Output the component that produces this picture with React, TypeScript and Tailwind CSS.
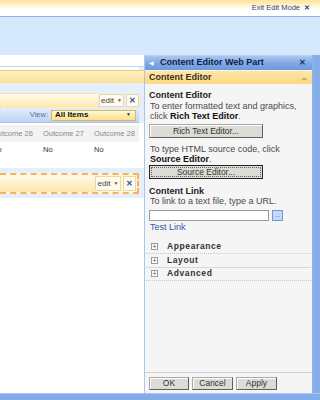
import React from "react";

const btn =
  "h-[13px] flex items-center justify-center bg-[#dcdbd5] border border-[#a9a9a9] border-r-[#5f5f5f] border-b-[#5f5f5f] shadow-[inset_1px_1px_0_#fff] text-[8.5px] text-[#333]";

function EditBox({ w }: { w: string }) {
  return (
    <div className="flex items-stretch gap-[2px] h-full py-[1px]">
      <div className={`${w} flex items-center justify-center gap-[3px] bg-[#fffaea] border border-[#ead9a6] text-[8px] text-[#444]`}>
        edit <span className="text-[5px] text-[#555]">▼</span>
      </div>
      <div className="w-[13px] flex items-center justify-center bg-[#fffaea] border border-[#ead9a6] text-[8px] font-bold text-[#3450a8]">
        ✕
      </div>
    </div>
  );
}

function Expander({ label, dotted }: { label: string; dotted?: boolean }) {
  return (
    <div
      className={`h-[13.5px] flex items-center gap-[9px] pl-[5px] border-b ${
        dotted ? "border-dotted border-[#c8c8c8]" : "border-[#d8d8d8]"
      }`}
    >
      <span className="w-[7px] h-[7px] border border-[#9a9a9a] bg-white flex items-center justify-center text-[7px] leading-none text-[#555]">
        +
      </span>
      <span className="text-[8.5px] font-bold tracking-[0.6px] text-[#333]">{label}</span>
    </div>
  );
}

export default function App() {
  return (
    <div className="w-[320px] h-[400px] overflow-hidden flex flex-col bg-white font-['Liberation_Sans',Arial,sans-serif]">
      {/* Top edit-mode bar */}
      <div className="h-[16px] flex items-center justify-end pr-[10px] gap-[4px] bg-[linear-gradient(#fbe39a,#fff4d2_35%,#ffffff_60%)]">
        <span className="text-[7.5px] text-[#33487e]">Exit Edit Mode</span>
        <span className="text-[7px] font-bold text-[#33487e]">✕</span>
      </div>
      <div className="h-[1px] bg-[#8cb2e6]" />
      <div className="h-[38px] bg-[#d6e8fc]" />

      {/* Main area */}
      <div className="h-[338px] flex">
        {/* Left page content */}
        <div className="w-[145px] bg-white flex flex-col overflow-hidden border-r border-[#a8c6ee]">
          <div className="h-[11px]" />
          <div className="border-t border-[#bcd3f2] bg-[#e5eefb] pr-[5px] flex flex-col">
            <div className="h-[3px] bg-white" />
            <div className="h-[13px] border-t border-[#f2c57c] bg-[linear-gradient(#fff1c4,#fde095)] -mr-[5px]" />
            <div className="h-[10px]" />
            {/* web part title */}
            <div className="h-[15px] flex items-stretch">
              <div className="flex-1 border-y border-dotted border-[#f2d9a0] bg-[linear-gradient(#fffbea,#fde9ad)]" />
              <div className="w-[1px]" />
              <EditBox w="w-[25px]" />
            </div>
            {/* toolbar */}
            <div className="h-[15px] flex items-center justify-end gap-[3px] pr-[3px] bg-[linear-gradient(#e4eefc,#bcd4f4)] border-b border-[#a7c3ea]">
              <span className="text-[7.5px] text-[#5a6f99]">View:</span>
              <div className="w-[85px] h-[11px] flex items-center justify-between pl-[3px] pr-[4px] bg-[linear-gradient(#fff6d2,#fde08e)] border border-[#d8b66c]">
                <span className="text-[8px] font-bold text-[#111]">All Items</span>
                <span className="text-[5px] text-[#333]">▼</span>
              </div>
            </div>
            {/* list */}
            <div className="bg-white -mr-[5px] pr-[5px]">
              <div className="h-[2px]" />
              <div className="h-[17px] bg-[#f3f3f3] flex items-center -ml-[8px] text-[7.5px] text-[#8a8a8a]">
                <span className="w-[51px] shrink-0">Outcome 26</span>
                <span className="w-[51px] shrink-0">Outcome 27</span>
                <span className="w-[51px] shrink-0">Outcome 28</span>
              </div>
              <div className="h-[16px] flex items-center -ml-[8px] text-[7.5px] text-[#333]">
                <span className="w-[51px] shrink-0">No</span>
                <span className="w-[51px] shrink-0">No</span>
                <span className="w-[51px] shrink-0">No</span>
              </div>
              <div className="h-[10px]" />
            </div>
            <div className="h-[5px]" />
            {/* selected web part */}
            <div className="h-[21px] border-2 border-dashed border-[#f6b35f] border-l-0 flex items-stretch bg-[#fff6dc]">
              <div className="flex-1 bg-[linear-gradient(#fffbea,#fde7aa)]" />
              <EditBox w="w-[26px]" />
              <div className="w-[1px]" />
            </div>
            <div className="h-[4px]" />
          </div>
          <div className="flex-1 bg-white" />
        </div>

        {/* Tool pane */}
        <div className="w-[168px] flex flex-col bg-[#f5f5f5] border-r border-[#8fb3e8]">
          <div className="h-[15px] flex items-center justify-between pl-[4px] pr-[6px] border-t border-[#b8d0f4] bg-[linear-gradient(#a9c6f2,#7ea6e2_55%,#6f9ad9)]">
            <div className="flex items-center gap-[6px]">
              <span className="text-[6px] text-white leading-none">◀</span>
              <span className="text-[9px] font-bold text-[#0e1e45]">Content Editor Web Part</span>
            </div>
            <span className="text-[8px] font-bold text-[#1d2f66]">✕</span>
          </div>
          <div className="h-[1px] bg-[#f5f5f5]" />
          <div className="h-[13px] flex items-center justify-between pl-[4px] pr-[4px] bg-[linear-gradient(#fee6a6,#fdd884)]">
            <span className="text-[9px] font-bold text-[#3a3020]">Content Editor</span>
            <span className="text-[7px] leading-none text-[#8c8670]">︽</span>
          </div>

          <div className="flex-1 flex flex-col pl-[4px] pr-[4px] text-[9px] text-[#4a4a4a]">
            <div className="mt-[6px] leading-[10px] font-bold text-[#222]">Content Editor</div>
            <div className="mt-[2px] leading-[9.5px] pl-[1px]">
              To enter formatted text and graphics,
              <br />
              click <span className="font-bold text-[#111]">Rich Text Editor</span>.
            </div>
            <div className={`${btn} mt-[3px] w-[114px] h-[14px]`}>Rich Text Editor...</div>

            <div className="mt-[7px] leading-[9.5px] pl-[1px]">
              To type HTML source code, click
              <br />
              <span className="font-bold text-[#111]">Source Editor</span>.
            </div>
            <div className="mt-[1px] w-[114px] h-[14px] border border-[#222] bg-[#dcdbd5] p-[1px]">
              <div className="h-full border border-dotted border-[#666] flex items-center justify-center text-[8.5px] text-[#333]">
                Source Editor...
              </div>
            </div>

            <div className="mt-[7px] leading-[10px] font-bold text-[#222]">Content Link</div>
            <div className="mt-[1px] leading-[9.5px] pl-[1px]">To link to a text file, type a URL.</div>
            <div className="mt-[3px] flex items-center gap-[3px]">
              <div className="w-[120px] h-[11px] bg-white border border-[#9a9a9a]" />
              <div className="w-[11px] h-[11px] bg-[#c6daf6] border border-[#6f98dc] flex items-center justify-center text-[6px] leading-none text-[#333]">
                ...
              </div>
            </div>
            <div className="mt-[2px] leading-[9px] pl-[1px] text-[#3654a2]">Test Link</div>

            <div className="mt-[9px] -mx-[3px]">
              <Expander label="Appearance" dotted />
              <Expander label="Layout" />
              <Expander label="Advanced" dotted />
            </div>

            <div className="mt-auto -mx-[4px] border-t border-[#d0d0d0] pt-[4px] pb-[3px] pl-[4px] flex gap-[3px]">
              <div className={`${btn} w-[40px] h-[13px]`}>OK</div>
              <div className={`${btn} w-[41px] h-[13px]`}>Cancel</div>
              <div className={`${btn} w-[41px] h-[13px]`}>Apply</div>
            </div>
          </div>
        </div>

        {/* right strip */}
        <div className="w-[7px] bg-[#86aeeb]" />
      </div>

      <div className="flex-1 bg-[#84ace9] border-t border-[#a9c5f0]" />
    </div>
  );
}
